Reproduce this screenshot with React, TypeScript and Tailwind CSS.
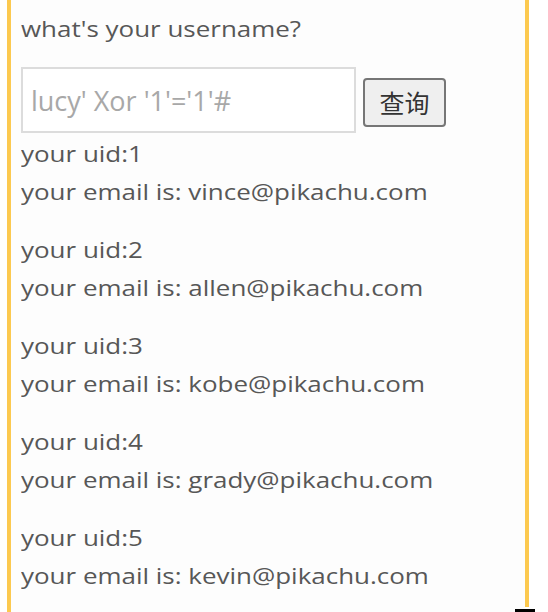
import React from 'react';

const users = [
  { uid: 1, email: 'vince@pikachu.com' },
  { uid: 2, email: 'allen@pikachu.com' },
  { uid: 3, email: 'kobe@pikachu.com' },
  { uid: 4, email: 'grady@pikachu.com' },
  { uid: 5, email: 'kevin@pikachu.com' },
];

// the source font is wider than Open Sans, so stretch lines a bit
const line = 'origin-left scale-x-[1.18] whitespace-nowrap';

export default function App() {
  return (
    <div className="relative w-[548px] h-[612px] bg-white overflow-hidden flex items-start font-['Open_Sans',sans-serif] text-[#575757]">
      <div className="ml-[7px] w-[518px] h-[612px] border-l-4 border-[#fcc94f] bg-[#fdfdfd] pl-[10px] pt-[9px]">
        <p className={`text-[22px] leading-[38px] ${line}`}>what's your username?</p>

        <form className="mt-[20px] flex items-start gap-[7px]" onSubmit={(e) => e.preventDefault()}>
          <input
            className="w-[335px] h-[66px] border-2 border-[#dcdcdc] bg-white px-[8px] text-[27px] outline-none placeholder:text-[#a8a8a8]"
            placeholder="lucy' Xor '1'='1'#"
          />
          <button
            type="button"
            className="w-[83px] h-[49px] mt-[11px] rounded-[4px] border-2 border-[#767676] bg-[#efefef] text-[25px] leading-none text-[#333] font-['Noto_Sans_CJK_SC',sans-serif]"
          >
            查询
          </button>
        </form>

        <div className="mt-[1px] text-[22px] leading-[38px]">
          {users.map((u) => (
            <div key={u.uid} className="mb-[20px]">
              <p className={line}>your uid:{u.uid}</p>
              <p className={line}>your email is: {u.email}</p>
            </div>
          ))}
        </div>
      </div>
      <div className="w-[4px] h-[607px] bg-[#fcc94f]" />
      {/* little black mark at the lower edge */}
      <div className="absolute left-[515px] top-[609px] w-[20px] h-[3px] bg-black" />
    </div>
  );
}
